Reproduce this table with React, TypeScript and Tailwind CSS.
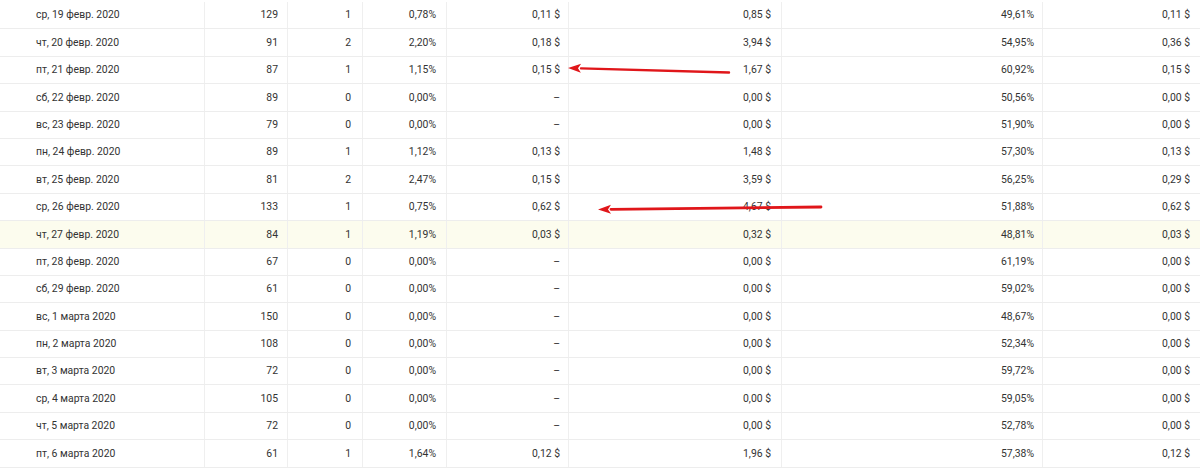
const rows: string[][] = [
  ["ср, 19 февр. 2020", "129", "1", "0,78%", "0,11 $", "0,85 $", "49,61%", "0,11 $"],
  ["чт, 20 февр. 2020", "91", "2", "2,20%", "0,18 $", "3,94 $", "54,95%", "0,36 $"],
  ["пт, 21 февр. 2020", "87", "1", "1,15%", "0,15 $", "1,67 $", "60,92%", "0,15 $"],
  ["сб, 22 февр. 2020", "89", "0", "0,00%", "–", "0,00 $", "50,56%", "0,00 $"],
  ["вс, 23 февр. 2020", "79", "0", "0,00%", "–", "0,00 $", "51,90%", "0,00 $"],
  ["пн, 24 февр. 2020", "89", "1", "1,12%", "0,13 $", "1,48 $", "57,30%", "0,13 $"],
  ["вт, 25 февр. 2020", "81", "2", "2,47%", "0,15 $", "3,59 $", "56,25%", "0,29 $"],
  ["ср, 26 февр. 2020", "133", "1", "0,75%", "0,62 $", "4,67 $", "51,88%", "0,62 $"],
  ["чт, 27 февр. 2020", "84", "1", "1,19%", "0,03 $", "0,32 $", "48,81%", "0,03 $"],
  ["пт, 28 февр. 2020", "67", "0", "0,00%", "–", "0,00 $", "61,19%", "0,00 $"],
  ["сб, 29 февр. 2020", "61", "0", "0,00%", "–", "0,00 $", "59,02%", "0,00 $"],
  ["вс, 1 марта 2020", "150", "0", "0,00%", "–", "0,00 $", "48,67%", "0,00 $"],
  ["пн, 2 марта 2020", "108", "0", "0,00%", "–", "0,00 $", "52,34%", "0,00 $"],
  ["вт, 3 марта 2020", "72", "0", "0,00%", "–", "0,00 $", "59,72%", "0,00 $"],
  ["ср, 4 марта 2020", "105", "0", "0,00%", "–", "0,00 $", "59,05%", "0,00 $"],
  ["чт, 5 марта 2020", "72", "0", "0,00%", "–", "0,00 $", "52,78%", "0,00 $"],
  ["пт, 6 марта 2020", "61", "1", "1,64%", "0,12 $", "1,96 $", "57,38%", "0,12 $"],
];

// right padding per numeric column
const pads = ["pr-[9px]", "pr-[11px]", "pr-[10px]", "pr-[8px]", "pr-[10px]", "pr-[8px]", "pr-[10px]"];

function Arrow({ x1, y1, x2, y2, w }: { x1: number; y1: number; x2: number; y2: number; w: number }) {
  const a = Math.atan2(y2 - y1, x2 - x1);
  const len = 13;
  const half = 4.5;
  const bx = x2 - len * Math.cos(a);
  const by = y2 - len * Math.sin(a);
  const px = -Math.sin(a) * half;
  const py = Math.cos(a) * half;
  return (
    <g>
      <line x1={x1} y1={y1} x2={bx} y2={by} stroke="#e0161a" strokeWidth={w} strokeLinecap="round" />
      <polygon points={`${x2},${y2} ${bx + px},${by + py} ${bx + 3 * Math.cos(a)},${by + 3 * Math.sin(a)} ${bx - px},${by - py}`} fill="#e0161a" />
    </g>
  );
}

export default function App() {
  return (
    <div className="relative w-[1200px] h-[469px] overflow-hidden bg-white pt-[2px] text-[10.4px] text-[#333] font-['Roboto','Liberation_Sans',sans-serif]">
      {rows.map((r, i) => (
        <div
          key={i}
          className={`grid grid-cols-[205px_83px_75px_84px_122px_213px_261px_157px] h-[27.4px] border-b border-[#ededed] ${
            i === 8 ? "bg-[#fcfcee]" : "bg-white"
          }`}
        >
          <div className="flex items-center pl-[36px] border-r border-[#efefef]">{r[0]}</div>
          {r.slice(1).map((c, j) => (
            <div
              key={j}
              className={`flex items-center justify-end ${pads[j]} ${j < 6 ? "border-r border-[#efefef]" : ""}`}
            >
              {c}
            </div>
          ))}
        </div>
      ))}
      <svg className="absolute left-0 top-0 pointer-events-none" width="1200" height="469">
        <Arrow x1={729} y1={72.5} x2={568} y2={68} w={2.4} />
        <Arrow x1={821} y1={207} x2={598} y2={209.5} w={2.8} />
      </svg>
    </div>
  );
}
